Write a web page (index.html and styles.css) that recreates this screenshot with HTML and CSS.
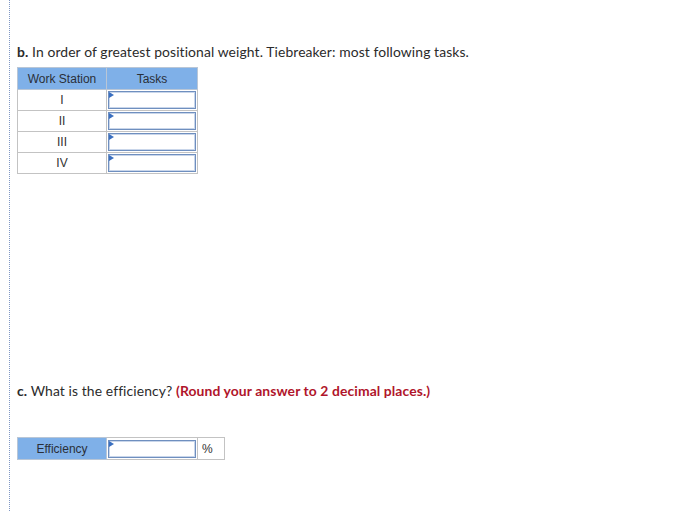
FILE: index.html
```html
<!DOCTYPE html>
<html>
<head>
<meta charset="utf-8">
<link rel="stylesheet" href="styles.css">
</head>
<body>
<div class="page">
  <p class="q q-b"><b>b.</b> In order of greatest positional weight. Tiebreaker: most following tasks.</p>
  <table class="grid">
    <thead>
      <tr><th class="c1">Work Station</th><th class="c2">Tasks</th></tr>
    </thead>
    <tbody>
      <tr><td class="c1">I</td><td class="c2"><div class="inp"></div></td></tr>
      <tr><td class="c1">II</td><td class="c2"><div class="inp"></div></td></tr>
      <tr><td class="c1">III</td><td class="c2"><div class="inp"></div></td></tr>
      <tr><td class="c1">IV</td><td class="c2"><div class="inp"></div></td></tr>
    </tbody>
  </table>
  <p class="q q-c"><b>c.</b> What is the efficiency? <span class="hint">(Round your answer to 2 decimal places.)</span></p>
  <table class="grid eff">
    <tr><th class="c1">Efficiency</th><td class="c2"><div class="inp"></div></td><td class="unit">%</td></tr>
  </table>
</div>
</body>
</html>
```

FILE: styles.css
```css
html, body {
  margin: 0;
  padding: 0;
  background: #fff;
}
body {
  font-family: "Lato", "Open Sans", sans-serif;
  color: #333;
}
.page {
  margin-left: 9px;
  border-left: 1px dotted #7f97c4;
  min-height: 511px;
  padding: 43px 0 0 7px;
  box-sizing: border-box;
}
.q {
  margin: 0;
  font-size: 13.9px;
  line-height: 18px;
  color: #2b2b2b;
  letter-spacing: 0.1px;
}
.q b { font-weight: 700; }
.q-b { margin-bottom: 6px; }
.q-c { margin-top: 208px; margin-bottom: 37px; }
.hint { color: #b0152b; font-weight: 700; }
.grid {
  border-collapse: collapse;
  font-family: "Liberation Sans", Arial, sans-serif;
  font-size: 12px;
  color: #333;
}
.grid th {
  background: #7fb0e8;
  font-weight: normal;
  height: 21px;
  padding: 0;
  border: 1px solid #b9c6d6;
  color: #2a2f38;
}
.grid td {
  padding: 0;
  border: 1px solid #c3c3c3;
  text-align: center;
}
.c1 { width: 88px; }
.c2 { width: 88px; }
.grid td.c2 { padding: 1px; }
.inp {
  position: relative;
  height: 18px;
  box-sizing: border-box;
  border: 1px solid #6f8fbf;
  box-shadow: inset 0 0 0 1px #c9d6ea;
  background: #fff;
}
.inp::before {
  content: "";
  position: absolute;
  left: 0;
  top: 0;
  border-left: 5px solid #3a6fc0;
  border-top: 3px solid transparent;
  border-bottom: 3px solid transparent;
}
.eff th { height: 21px; }
.unit {
  width: 22px;
  text-align: left !important;
  padding-left: 4px !important;
  font-size: 12px;
}
```
